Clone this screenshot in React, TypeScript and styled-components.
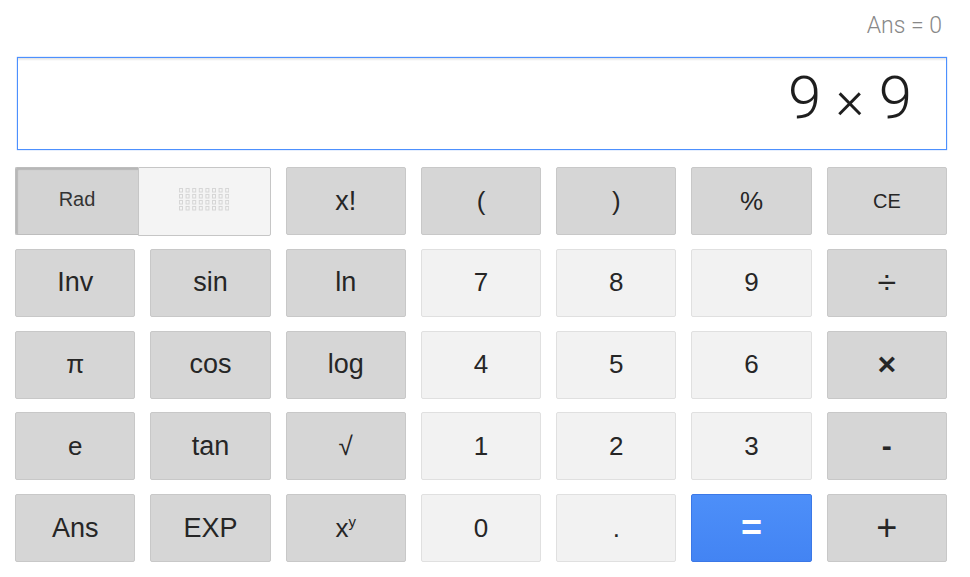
import React from "react";
import styled, { createGlobalStyle, css } from "styled-components";

const Global = createGlobalStyle`
  html, body { margin: 0; padding: 0; background: #fff; }
  body { font-family: "Liberation Sans", Arial, sans-serif; }
`;

const Page = styled.div`
  width: 970px;
  height: 577px;
  box-sizing: border-box;
  padding: 13px 23px 0 15px;
  display: flex;
  flex-direction: column;
`;

const AnsLine = styled.div`
  height: 26px;
  text-align: right;
  padding-right: 5px;
  font-family: Roboto, "Liberation Sans", sans-serif;
  font-weight: 300;
  font-size: 23px;
  line-height: 26px;
  color: #888;
`;

const Display = styled.div`
  position: relative;
  margin: 18px 0 0 2px;
  height: 93px;
  box-sizing: border-box;
  border: 1px solid #4d90fe;
  box-shadow: 0 0 1px rgba(77, 144, 254, 0.8);
  display: flex;
  align-items: center;
  justify-content: flex-end;
  padding: 0 34px 12px 0;
  font-family: Roboto, "Liberation Sans", sans-serif;
  font-weight: 300;
  font-size: 60px;
  color: #1e1e1e;
  &::before {
    content: "";
    position: absolute;
    left: 0;
    right: 0;
    top: 0;
    height: 3px;
    background: linear-gradient(rgba(0, 0, 0, 0.12), rgba(0, 0, 0, 0));
  }
`;

const Expr = styled.span`
  white-space: pre;
`;

const Times = styled.span`
  font-size: 54px;
`;

const Grid = styled.div`
  margin-top: 17px;
  display: grid;
  grid-template-columns: repeat(7, 1fr);
  grid-auto-rows: 68px;
  column-gap: 15px;
  row-gap: 13.75px;
`;

type Kind = "dark" | "light" | "blue";

const Key = styled.div<{ $kind: Kind; $size?: number; $bold?: boolean }>`
  box-sizing: border-box;
  border-radius: 2px;
  display: flex;
  align-items: center;
  justify-content: center;
  font-size: ${(p) => p.$size ?? 26}px;
  font-weight: ${(p) => (p.$bold ? "bold" : "normal")};
  color: #262626;
  ${(p) =>
    p.$kind === "dark" &&
    css`
      background: #d6d6d6;
      border: 1px solid #c8c8c8;
    `}
  ${(p) =>
    p.$kind === "light" &&
    css`
      background: #f2f2f2;
      border: 1px solid #e0e0e0;
    `}
  ${(p) =>
    p.$kind === "blue" &&
    css`
      background: linear-gradient(#4d8ff9, #4384f3);
      border: 1px solid #3b78e7;
      color: #fff;
      font-weight: bold;
      font-size: 36px;
    `}
`;

const Toggle = styled.div`
  grid-column: span 2;
  display: flex;
`;

const RadPart = styled.div`
  width: 123px;
  box-sizing: border-box;
  background: #d3d3d3;
  border: 1px solid #bdbdbd;
  border-right: none;
  box-shadow: inset 2px 2px 1px rgba(0, 0, 0, 0.13);
  border-radius: 2px 0 0 2px;
  display: flex;
  align-items: center;
  justify-content: center;
  font-size: 20px;
  color: #333;
  padding-bottom: 4px;
`;

const DegPart = styled.div`
  flex: 1;
  box-sizing: border-box;
  margin-bottom: -1px;
  background: #f4f4f4;
  border: 1px solid #c6c6c6;
  border-radius: 0 2px 2px 0;
  display: flex;
  align-items: center;
  justify-content: center;
  padding-bottom: 4px;
`;

const Sup = styled.sup`
  font-size: 15px;
  vertical-align: 10px;
  line-height: 0;
`;

const DotGrid = () => {
  const cells = [];
  for (let r = 0; r < 4; r++) {
    for (let c = 0; c < 8; c++) {
      cells.push(
        <rect
          key={`${r}-${c}`}
          x={c * 6.6 + 0.5}
          y={r * 6 + 0.5}
          width={3}
          height={3.5}
          fill="none"
          stroke="#d6d6d6"
          strokeWidth={1}
        />
      );
    }
  }
  return (
    <svg width="50" height="23" viewBox="0 0 50 23">
      {cells}
    </svg>
  );
};

type K = { label: React.ReactNode; kind: Kind; size?: number; bold?: boolean };

const rows: K[][] = [
  [
    { label: "x!", kind: "dark", size: 27 },
    { label: "(", kind: "dark" },
    { label: ")", kind: "dark" },
    { label: "%", kind: "dark" },
    { label: "CE", kind: "dark", size: 20 },
  ],
  [
    { label: "Inv", kind: "dark", size: 27 },
    { label: "sin", kind: "dark", size: 27 },
    { label: "ln", kind: "dark", size: 27 },
    { label: "7", kind: "light" },
    { label: "8", kind: "light" },
    { label: "9", kind: "light" },
    { label: "÷", kind: "dark", size: 34 },
  ],
  [
    { label: "π", kind: "dark" },
    { label: "cos", kind: "dark", size: 27 },
    { label: "log", kind: "dark", size: 27 },
    { label: "4", kind: "light" },
    { label: "5", kind: "light" },
    { label: "6", kind: "light" },
    { label: "×", kind: "dark", size: 32, bold: true },
  ],
  [
    { label: "e", kind: "dark" },
    { label: "tan", kind: "dark", size: 27 },
    { label: "√", kind: "dark" },
    { label: "1", kind: "light" },
    { label: "2", kind: "light" },
    { label: "3", kind: "light" },
    { label: "-", kind: "dark", size: 30, bold: true },
  ],
  [
    { label: "Ans", kind: "dark", size: 27 },
    { label: "EXP", kind: "dark", size: 27 },
    {
      label: (
        <span>
          x<Sup>y</Sup>
        </span>
      ),
      kind: "dark",
    },
    { label: "0", kind: "light" },
    { label: ".", kind: "light" },
    { label: "=", kind: "blue" },
    { label: "+", kind: "dark", size: 36 },
  ],
];

export default function App() {
  return (
    <>
      <Global />
      <Page>
        <AnsLine>Ans = 0</AnsLine>
        <Display>
          <Expr>
            9 <Times>×</Times> 9
          </Expr>
        </Display>
        <Grid>
          <Toggle>
            <RadPart>Rad</RadPart>
            <DegPart>
              <DotGrid />
            </DegPart>
          </Toggle>
          {rows.map((row, ri) =>
            row.map((k, ki) => (
              <Key key={`${ri}-${ki}`} $kind={k.kind} $size={k.size} $bold={k.bold}>
                {k.label}
              </Key>
            ))
          )}
        </Grid>
      </Page>
    </>
  );
}
